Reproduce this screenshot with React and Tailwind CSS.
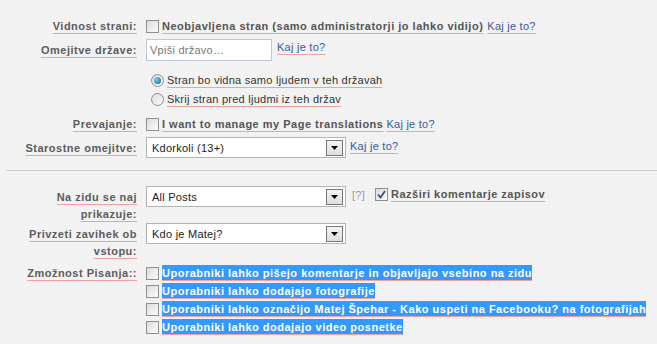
import React from 'react';

const sq = 'underline decoration-[#f2a0a0] underline-offset-[3px]';
const bold = 'font-bold tracking-[0.5px]';

const Box = ({ checked }) => (
  <span className="inline-flex h-[13px] w-[13px] shrink-0 items-center justify-center border border-[#8e8f8f] bg-gradient-to-br from-[#dcdcdc] to-[#fbfbfb]">
    {checked && (
      <svg width="9" height="9" viewBox="0 0 9 9">
        <path d="M1 4.5 L3.5 7.5 L8 1" fill="none" stroke="#3a4d8f" strokeWidth="1.8" />
      </svg>
    )}
  </span>
);

const Radio = ({ on }) => (
  <span className="inline-flex h-[13px] w-[13px] shrink-0 items-center justify-center rounded-full border border-[#8e8f8f] bg-gradient-to-br from-[#dcdcdc] to-[#fbfbfb]">
    {on && <span className="h-[7px] w-[7px] rounded-full bg-[radial-gradient(circle_at_35%_35%,#7fd2f5,#0a5f8a)]" />}
  </span>
);

const Link = () => <span className={`text-[#3b5998] ${sq}`}>Kaj je to?</span>;

const Select = ({ value }) => (
  <div className="flex h-[21px] w-[200px] items-center justify-between border border-[#b4b4b4] bg-white pl-[5px] pr-[2px] text-[#222]">
    <span>{value}</span>
    <span className="flex h-[16px] w-[17px] items-center justify-center border border-[#777] bg-gradient-to-b from-[#f4f4f4] to-[#dedede]">
      <svg width="7" height="4" viewBox="0 0 7 4">
        <path d="M0 0 H7 L3.5 4 Z" fill="#000" />
      </svg>
    </span>
  </div>
);

const Label = ({ children, className = '' }) => (
  <div className={`w-[137px] shrink-0 text-right text-[#5c5c5c] ${bold} ${className}`}>
    <span className={sq}>{children}</span>
  </div>
);

const Row = ({ label, children, className = '' }) => (
  <div className={`flex gap-[9px] ${className}`}>
    <Label>{label}</Label>
    <div className="flex-1">{children}</div>
  </div>
);

const Highlight = ({ text }) => (
  <div className="flex h-[18px] items-center gap-[3px]">
    <Box />
    <span className={`bg-[#3399ff] text-white leading-[16px] ${bold} ${sq}`}>{text}</span>
  </div>
);

export default function App() {
  return (
    <div className="h-[344px] w-[657px] overflow-hidden bg-[#f2f2f2] pt-[19px] text-[11px] leading-[14px] tracking-[0.25px] [font-family:'Liberation_Sans',Arial,sans-serif]">
      <Row label="Vidnost strani:">
        <div className="flex items-center gap-[3px]">
          <Box />
          <span className={`text-[#555] ${bold} ${sq}`}>Neobjavljena stran (samo administratorji jo lahko vidijo)</span>
          <span className="ml-[1px]"><Link /></span>
        </div>
      </Row>

      <Row label="Omejitve države:" className="mt-[6px] items-center">
        <div className="flex items-start gap-[5px]">
          <div className="flex h-[22px] w-[126px] items-center border border-[#bdc7d8] bg-white px-[3px] text-[#777]">Vpiši državo…</div>
          <span className="mt-[1px]"><Link /></span>
        </div>
      </Row>

      <div className="ml-[151px] mt-[12px] flex flex-col gap-[5px] text-[#333]">
        <div className="flex items-center gap-[3px]">
          <Radio on />
          <span className={sq}>Stran bo vidna samo ljudem v teh državah</span>
        </div>
        <div className="flex items-center gap-[3px]">
          <Radio />
          <span className={sq}>Skrij stran pred ljudmi iz teh držav</span>
        </div>
      </div>

      <Row label="Prevajanje:" className="mt-[11px] items-center">
        <div className="flex items-center gap-[3px]">
          <Box />
          <span className={`text-[#555] ${bold} ${sq}`}>I want to manage my Page translations</span>
          <Link />
        </div>
      </Row>

      <Row label="Starostne omejitve:" className="mt-[6px] items-center">
        <div className="flex items-center gap-[4px]">
          <Select value="Kdorkoli (13+)" />
          <span className="-mt-[3px]"><Link /></span>
        </div>
      </Row>

      <div className="ml-[6px] mt-[12px] border-t border-[#cccccc]" />

      <div className="mt-[15px] flex gap-[9px]">
        <Label className="pt-[3px] leading-[17px]">
          Na zidu se naj
          <br />
          prikazuje:
        </Label>
        <div className="flex items-start gap-[6px]">
          <Select value="All Posts" />
          <span className="mt-[2px] text-[#999]">[?]</span>
          <div className="ml-[4px] mt-[1px] flex items-center gap-[3px]">
            <Box checked />
            <span className={`text-[#555] ${bold} ${sq}`}>Razširi komentarje zapisov</span>
          </div>
        </div>
      </div>

      <div className="flex gap-[9px]">
        <Label className="pt-[3px] leading-[17px]">
          Privzeti zavihek ob
          <br />
          vstopu:
        </Label>
        <Select value="Kdo je Matej?" />
      </div>

      <div className="mt-[4px] flex gap-[9px]">
        <Label className="pt-[2px]">Zmožnost Pisanja::</Label>
        <div className="flex flex-col">
          <Highlight text="Uporabniki lahko pišejo komentarje in objavljajo vsebino na zidu" />
          <Highlight text="Uporabniki lahko dodajajo fotografije" />
          <Highlight text="Uporabniki lahko označijo Matej Špehar - Kako uspeti na Facebooku? na fotografijah" />
          <Highlight text="Uporabniki lahko dodajajo video posnetke" />
        </div>
      </div>
    </div>
  );
}
